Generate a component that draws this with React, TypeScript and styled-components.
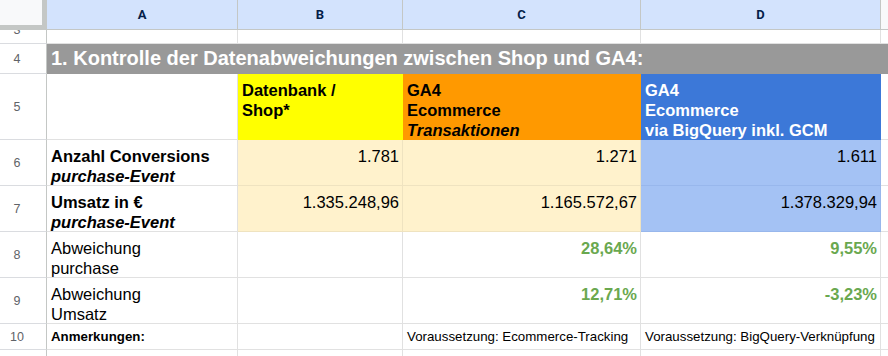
import { createGlobalStyle, styled } from "styled-components";

const GlobalStyle = createGlobalStyle`
  html, body {
    margin: 0;
    padding: 0;
    background: #ffffff;
  }
  body {
    font-family: "Liberation Sans", Arial, sans-serif;
  }
`;

type Tone = "plain" | "yellow" | "orange" | "blue" | "cream" | "sky";

const tones: Record<Tone, { bg: string; line: string; fg: string }> = {
  plain: { bg: "#ffffff", line: "#e1e1e1", fg: "#000000" },
  yellow: { bg: "#ffff00", line: "#ffff00", fg: "#000000" },
  orange: { bg: "#ff9900", line: "#ff9900", fg: "#000000" },
  blue: { bg: "#3c78d8", line: "#3c78d8", fg: "#ffffff" },
  cream: { bg: "#fff2cc", line: "#efe3c0", fg: "#000000" },
  sky: { bg: "#a4c2f4", line: "#98b7ec", fg: "#000000" },
};

const Sheet = styled.div`
  display: grid;
  grid-template-columns: 47px 191px 165px 238px 240px 1fr;
  grid-template-rows: 30px 14px 30px 66px 46px 46px 46px 46px 26px 1fr;
  width: 888px;
  height: 356px;
  overflow: hidden;
  background: #ffffff;
`;

const Corner = styled.div`
  box-sizing: border-box;
  background: #f8f9fa;
  border-right: 5px solid #c4c7c5;
  border-bottom: 5px solid #c4c7c5;
`;

const ColHead = styled.div<{ $selected?: boolean }>`
  box-sizing: border-box;
  display: flex;
  align-items: center;
  justify-content: center;
  background: ${(p) => (p.$selected ? "#d3e3fd" : "#f8f9fa")};
  border-right: 1px solid #c4c7c5;
  border-bottom: 1px solid #c4c7c5;
  color: #041e49;
  font-family: Roboto, "Liberation Sans", sans-serif;
  font-size: 13px;
  font-weight: 700;
`;

const RowNum = styled.div<{ $clip?: boolean }>`
  box-sizing: border-box;
  display: flex;
  align-items: ${(p) => (p.$clip ? "flex-start" : "center")};
  justify-content: center;
  padding-right: 12px;
  overflow: hidden;
  background: #ffffff;
  border-right: 1px solid #c4c7c5;
  border-bottom: 1px solid #dadce0;
  color: #5f6368;
  font-family: "Liberation Sans", Arial, sans-serif;
  font-size: 12.5px;
  line-height: 14px;

  & span {
    margin-top: ${(p) => (p.$clip ? "-7px" : "0")};
  }
`;

const Banner = styled.div`
  grid-column: 2 / -1;
  display: flex;
  align-items: center;
  padding: 0 4px 2px;
  background: #999999;
  color: #ffffff;
  font-size: 20px;
  font-weight: 700;
  white-space: nowrap;
`;

const Cell = styled.div<{ $tone?: Tone; $right?: boolean; $middle?: boolean }>`
  box-sizing: border-box;
  min-width: 0;
  display: flex;
  flex-direction: column;
  justify-content: ${(p) => (p.$middle ? "center" : "flex-start")};
  align-items: ${(p) => (p.$right ? "flex-end" : "flex-start")};
  padding: ${(p) => (p.$middle ? "0 3px 1px 4px" : "6px 3px 0 4px")};
  overflow: hidden;
  white-space: nowrap;
  background: ${(p) => tones[p.$tone ?? "plain"].bg};
  color: ${(p) => tones[p.$tone ?? "plain"].fg};
  border-right: 1px solid ${(p) => tones[p.$tone ?? "plain"].line};
  border-bottom: 1px solid ${(p) => tones[p.$tone ?? "plain"].line};
  font-size: 16.5px;
  line-height: 20px;
`;

const Text = styled.span<{
  $bold?: boolean;
  $italic?: boolean;
  $note?: boolean;
  $green?: boolean;
}>`
  display: block;
  font-weight: ${(p) => (p.$bold ? 700 : 400)};
  font-style: ${(p) => (p.$italic ? "italic" : "normal")};
  font-size: ${(p) => (p.$note ? "13.3px" : "16.5px")};
  line-height: ${(p) => (p.$note ? "17px" : "20px")};
  color: ${(p) => (p.$green ? "#6aa84f" : "inherit")};
`;

const columns = ["A", "B", "C", "D"];

const App = () => {
  return (
    <>
      <GlobalStyle />
      <Sheet>
        {/* column headers */}
        <Corner />
        {columns.map((c) => (
          <ColHead key={c} $selected>
            {c}
          </ColHead>
        ))}
        <ColHead />

        {/* row 3, scrolled half out of view */}
        <RowNum $clip>
          <span>3</span>
        </RowNum>
        <Cell />
        <Cell />
        <Cell />
        <Cell />
        <Cell />

        {/* row 4 */}
        <RowNum>4</RowNum>
        <Banner>1. Kontrolle der Datenabweichungen zwischen Shop und GA4:</Banner>

        {/* row 5 */}
        <RowNum>5</RowNum>
        <Cell />
        <Cell $tone="yellow">
          <Text $bold>Datenbank /</Text>
          <Text $bold>Shop*</Text>
        </Cell>
        <Cell $tone="orange">
          <Text $bold>GA4</Text>
          <Text $bold>Ecommerce</Text>
          <Text $bold $italic>
            Transaktionen
          </Text>
        </Cell>
        <Cell $tone="blue">
          <Text $bold>GA4</Text>
          <Text $bold>Ecommerce</Text>
          <Text $bold>via BigQuery inkl. GCM</Text>
        </Cell>
        <Cell />

        {/* row 6 */}
        <RowNum>6</RowNum>
        <Cell>
          <Text $bold>Anzahl Conversions</Text>
          <Text $bold $italic>
            purchase-Event
          </Text>
        </Cell>
        <Cell $tone="cream" $right>
          <Text>1.781</Text>
        </Cell>
        <Cell $tone="cream" $right>
          <Text>1.271</Text>
        </Cell>
        <Cell $tone="sky" $right>
          <Text>1.611</Text>
        </Cell>
        <Cell />

        {/* row 7 */}
        <RowNum>7</RowNum>
        <Cell>
          <Text $bold>Umsatz in €</Text>
          <Text $bold $italic>
            purchase-Event
          </Text>
        </Cell>
        <Cell $tone="cream" $right>
          <Text>1.335.248,96</Text>
        </Cell>
        <Cell $tone="cream" $right>
          <Text>1.165.572,67</Text>
        </Cell>
        <Cell $tone="sky" $right>
          <Text>1.378.329,94</Text>
        </Cell>
        <Cell />

        {/* row 8 */}
        <RowNum>8</RowNum>
        <Cell>
          <Text>Abweichung</Text>
          <Text>purchase</Text>
        </Cell>
        <Cell />
        <Cell $right>
          <Text $bold $green>
            28,64%
          </Text>
        </Cell>
        <Cell $right>
          <Text $bold $green>
            9,55%
          </Text>
        </Cell>
        <Cell />

        {/* row 9 */}
        <RowNum>9</RowNum>
        <Cell>
          <Text>Abweichung</Text>
          <Text>Umsatz</Text>
        </Cell>
        <Cell />
        <Cell $right>
          <Text $bold $green>
            12,71%
          </Text>
        </Cell>
        <Cell $right>
          <Text $bold $green>
            -3,23%
          </Text>
        </Cell>
        <Cell />

        {/* row 10 */}
        <RowNum>10</RowNum>
        <Cell $middle>
          <Text $bold $note>
            Anmerkungen:
          </Text>
        </Cell>
        <Cell $middle />
        <Cell $middle>
          <Text $note>Voraussetzung: Ecommerce-Tracking</Text>
        </Cell>
        <Cell $middle>
          <Text $note>Voraussetzung: BigQuery-Verknüpfung</Text>
        </Cell>
        <Cell $middle />

        {/* row 11 */}
        <RowNum />
        <Cell />
        <Cell />
        <Cell />
        <Cell />
        <Cell />
      </Sheet>
    </>
  );
};

export default App;
